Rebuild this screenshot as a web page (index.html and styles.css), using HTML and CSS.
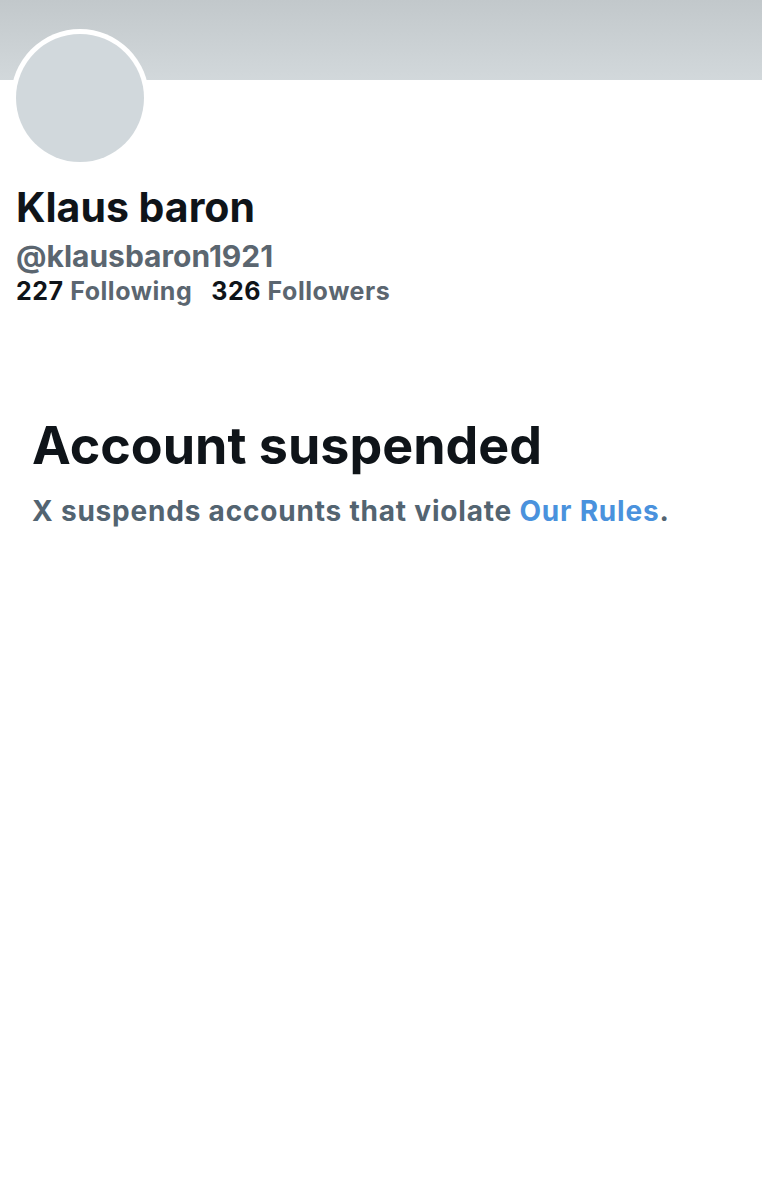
FILE: index.html
```html
<!DOCTYPE html>
<html>
<head>
<meta charset="utf-8">
<link rel="stylesheet" href="styles.css">
</head>
<body>
<div class="page">
  <div class="banner"></div>
  <div class="header">
    <div class="avatar-ring"><div class="avatar"></div></div>
  </div>
  <div class="info">
    <h1 class="name">Klaus baron</h1>
    <div class="handle">@klausbaron1921</div>
    <div class="stats">
      <span class="stat"><b>227</b> Following</span>
      <span class="stat"><b>326</b> Followers</span>
    </div>
  </div>
  <div class="suspended">
    <h2 class="title">Account suspended</h2>
    <p class="desc">X suspends accounts that violate <a class="link" href="#">Our Rules</a>.</p>
  </div>
</div>
</body>
</html>
```
FILE: styles.css
```css
html, body {
  margin: 0;
  padding: 0;
  background: #ffffff;
}
body {
  font-family: Inter, "Liberation Sans", Arial, sans-serif;
  width: 762px;
  height: 1200px;
  overflow: hidden;
}
.banner {
  height: 80px;
  background: linear-gradient(180deg, #c2c8cb 0%, #d2d8db 100%);
}
.header {
  height: 84px;
  position: relative;
}
.avatar-ring {
  position: absolute;
  left: 11px;
  top: -51px;
  width: 138px;
  height: 138px;
  border-radius: 50%;
  background: #ffffff;
  display: flex;
  align-items: center;
  justify-content: center;
}
.avatar {
  width: 128px;
  height: 128px;
  border-radius: 50%;
  background: #d1d8dc;
}
.info {
  padding: 0 16px;
}
.name {
  margin: 19px 0 0;
  font-size: 41px;
  line-height: 48px;
  font-weight: 700;
  color: #0f1419;
}
.handle {
  margin-top: 7px;
  font-size: 30px;
  line-height: 36px;
  font-weight: 700;
  color: #5b6670;
}
.stats {
  margin-top: 1px;
  display: flex;
  gap: 19px;
  font-size: 25px;
  line-height: 32px;
  font-weight: 700;
  color: #5b6670;
  letter-spacing: 0.55px;
}
.stat b {
  color: #0f1419;
  font-weight: 700;
}
.suspended {
  padding: 0 32px;
  margin-top: 108px;
}
.title {
  margin: 0;
  font-size: 52px;
  line-height: 62px;
  font-weight: 700;
  color: #0f1419;
}
.desc {
  margin: 17px 0 0;
  font-size: 28px;
  line-height: 34px;
  font-weight: 700;
  color: #536471;
  letter-spacing: 0.8px;
}
.link {
  color: #4a92dd;
  text-decoration: none;
}
```
